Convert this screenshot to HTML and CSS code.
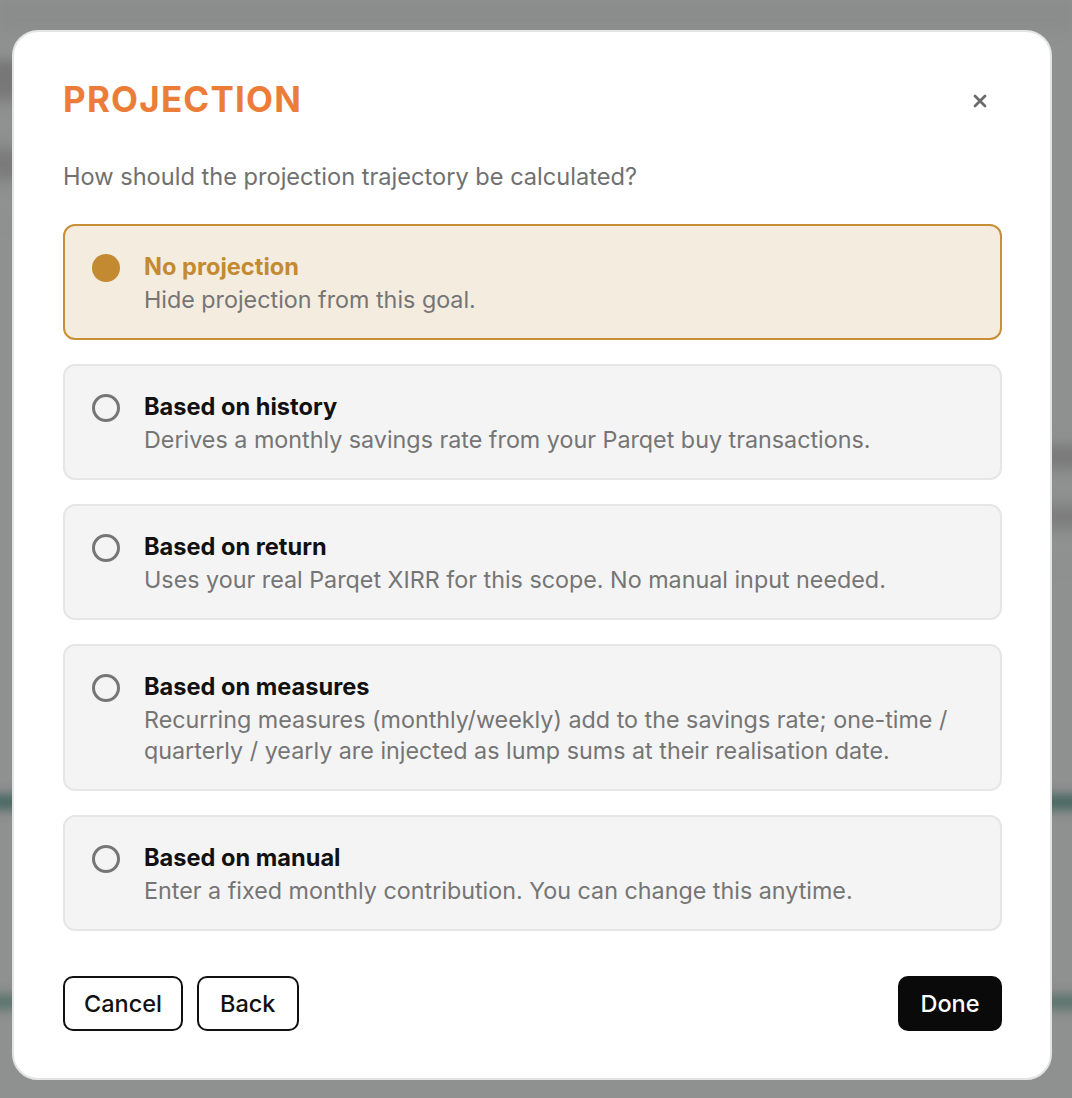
FILE: index.html
```html
<!DOCTYPE html>
<html lang="en">
<head>
<meta charset="utf-8">
<title>Projection</title>
<link rel="stylesheet" href="styles.css">
</head>
<body>
<div class="backdrop">
  <div class="blur blur-a"></div>
  <div class="blur blur-b"></div>
  <div class="blur blur-c"></div>
  <div class="blur blur-d"></div>
  <div class="blur blur-e"></div>
</div>
<div class="stage">
  <section class="dialog" role="dialog" aria-labelledby="dlg-title">
    <header class="dialog-head">
      <h1 id="dlg-title" class="dialog-title">PROJECTION</h1>
      <button class="close" aria-label="Close">
        <svg width="14" height="14" viewBox="0 0 14 14"><path d="M2 2 L12 12 M12 2 L2 12" stroke="#6b6b6b" stroke-width="2.8" stroke-linecap="round"/></svg>
      </button>
    </header>
    <p class="question">How should the projection trajectory be calculated?</p>
    <div class="options">
      <label class="option selected">
        <span class="radio"></span>
        <span class="option-text">
          <span class="option-title">No projection</span>
          <span class="option-desc">Hide projection from this goal.</span>
        </span>
      </label>
      <label class="option">
        <span class="radio"></span>
        <span class="option-text">
          <span class="option-title">Based on history</span>
          <span class="option-desc">Derives a monthly savings rate from your Parqet buy transactions.</span>
        </span>
      </label>
      <label class="option">
        <span class="radio"></span>
        <span class="option-text">
          <span class="option-title">Based on return</span>
          <span class="option-desc">Uses your real Parqet XIRR for this scope. No manual input needed.</span>
        </span>
      </label>
      <label class="option">
        <span class="radio"></span>
        <span class="option-text">
          <span class="option-title">Based on measures</span>
          <span class="option-desc">Recurring measures (monthly/weekly) add to the savings rate; one-time / quarterly / yearly are injected as lump sums at their realisation date.</span>
        </span>
      </label>
      <label class="option">
        <span class="radio"></span>
        <span class="option-text">
          <span class="option-title">Based on manual</span>
          <span class="option-desc">Enter a fixed monthly contribution. You can change this anytime.</span>
        </span>
      </label>
    </div>
    <footer class="dialog-foot">
      <div class="foot-left">
        <button class="btn btn-outline">Cancel</button>
        <button class="btn btn-outline btn-back">Back</button>
      </div>
      <button class="btn btn-solid">Done</button>
    </footer>
  </section>
</div>
</body>
</html>
```

FILE: styles.css
```css
* { box-sizing: border-box; }

html, body {
  margin: 0;
  padding: 0;
  height: 100%;
}

body {
  font-family: "Inter", "Noto Sans", sans-serif;
  background: #8f9090;
  overflow: hidden;
}

/* blurred page behind the overlay */
.backdrop {
  position: fixed;
  inset: 0;
  background: #8f9090;
  overflow: hidden;
}
.blur {
  position: absolute;
  filter: blur(6px);
}
.blur-a { left: -10px; top: 60px; width: 40px; height: 160px; background: linear-gradient(#777 0 20%, #8f9090 30% 50%, #7a7a7a 60% 70%, #8f9090 80%); }
.blur-b { left: -10px; top: 795px; width: 1100px; height: 14px; background: #3f625b; }
.blur-c { left: -10px; top: 995px; width: 1100px; height: 14px; background: #557068; }
.blur-d { right: -10px; top: 445px; width: 40px; height: 120px; background: linear-gradient(#7a7a7a 0 15%, #8f9090 25% 45%, #7d7d7d 55% 65%, #8f9090 75%); }
.blur-e { left: 0; top: 0; width: 100%; height: 30px; background: #8b8c8c; }

.stage {
  position: relative;
  padding: 30px 20px 18px 12px;
}

.dialog {
  width: 1040px;
  height: 1050px;
  background: #fff;
  border: 2px solid #e4e4e4;
  border-radius: 26px;
  padding: 46px 48px 47px 49px;
  display: flex;
  flex-direction: column;
}

.dialog-head {
  display: flex;
  align-items: center;
  justify-content: space-between;
  height: 42px;
}

.dialog-title {
  margin: 0;
  font-size: 35px;
  font-weight: 700;
  letter-spacing: 1.2px;
  color: #ec7d38;
  line-height: 42px;
}

.close {
  border: 0;
  background: none;
  padding: 0;
  margin: 3px 15px 0 0;
  width: 14px;
  height: 14px;
  display: flex;
}

.question {
  margin: 42px 0 0;
  font-size: 23.6px;
  line-height: 30px;
  color: #707070;
}

.options {
  margin-top: 32px;
  display: flex;
  flex-direction: column;
  gap: 24px;
}

.option {
  display: flex;
  align-items: flex-start;
  gap: 24px;
  min-height: 116px;
  padding: 26px 27px 23px 27px;
  background: #f4f4f4;
  border: 2px solid #e6e6e6;
  border-radius: 12px;
}

.radio {
  flex: none;
  width: 28px;
  height: 28px;
  margin-top: 2px;
  border-radius: 50%;
  border: 3px solid #767676;
}

.option-text {
  display: flex;
  flex-direction: column;
}

.option-title {
  font-size: 23.6px;
  font-weight: 700;
  line-height: 30px;
  height: 30px;
  color: #111;
}

.option-desc {
  margin-top: 2px;
  font-size: 23.3px;
  line-height: 31px;
  color: #757575;
}

.option.selected {
  background: #f5ece0;
  border-color: #c98f35;
}
.option.selected .radio {
  border: 0;
  background: #c48a32;
}
.option.selected .option-title {
  color: #c48a32;
}

.dialog-foot {
  margin-top: auto;
  display: flex;
  align-items: center;
  justify-content: space-between;
}

.foot-left {
  display: flex;
  gap: 14px;
}

.btn {
  height: 55px;
  padding: 0 19px;
  border-radius: 10px;
  font-family: inherit;
  font-size: 23.5px;
  font-weight: 500;
  cursor: pointer;
}

.btn-outline {
  background: #fff;
  color: #111;
  border: 2px solid #111;
}

.btn-back {
  padding: 0 21px;
}

.btn-solid {
  background: #0a0a0a;
  color: #fff;
  border: 2px solid #0a0a0a;
  width: 104px;
  padding: 0;
}
```
